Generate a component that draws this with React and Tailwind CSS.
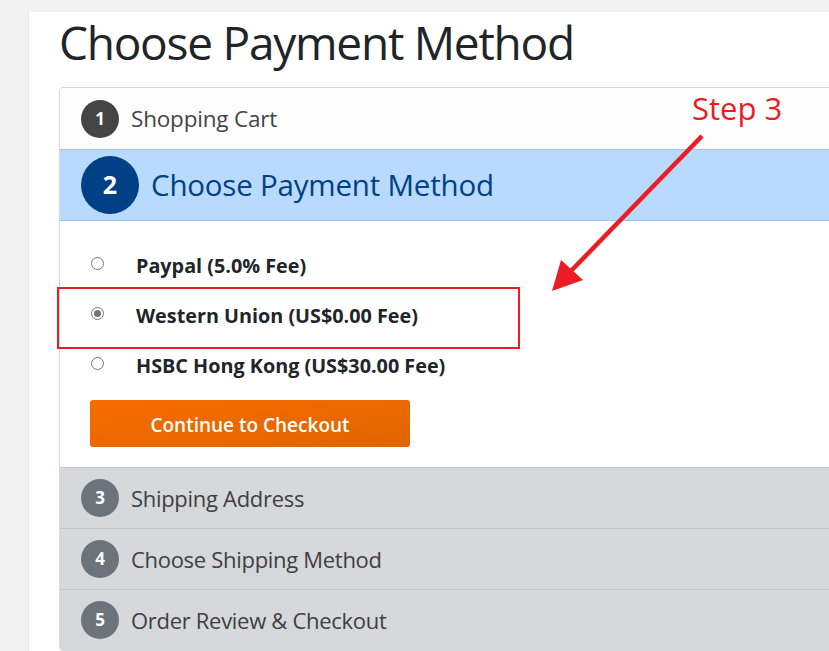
import React from "react";

const font = { fontFamily: '"Open Sans", "Noto Sans", sans-serif' };

function Circle({ n, className }) {
  return (
    <div className={`flex items-center justify-center rounded-full text-white font-bold shrink-0 ${className}`}>
      {n}
    </div>
  );
}

function Radio({ checked }) {
  return (
    <div className="w-[13px] h-[13px] rounded-full border border-[#767676] bg-white flex items-center justify-center shrink-0">
      {checked && <div className="w-[7px] h-[7px] rounded-full bg-[#767676]" />}
    </div>
  );
}

export default function App() {
  const options = [
    { label: "Paypal (5.0% Fee)", checked: false },
    { label: "Western Union (US$0.00 Fee)", checked: true },
    { label: "HSBC Hong Kong (US$30.00 Fee)", checked: false },
  ];
  const later = ["Shipping Address", "Choose Shipping Method", "Order Review & Checkout"];
  return (
    <div className="relative w-[829px] h-[651px] overflow-hidden bg-[#f2f2f2]" style={font}>
      <div className="pt-[12px] pl-[28px]">
        <div className="w-[1100px] h-[700px] bg-white border-l border-[#e6e6e6] pl-[30px]">
          <h1 className="text-[46px] leading-[52px] pt-[4px] pb-[19px] text-[#212529] tracking-[-1.25px]">
            Choose Payment Method
          </h1>
          <div className="border border-[#d9d9d9] rounded-[4px] overflow-hidden w-[900px]">
            <div className="h-[61px] bg-[#fdfdfd] flex items-center pl-[21px] gap-[12px]">
              <Circle n="1" className="w-[38px] h-[38px] bg-[#454545] text-[17px]" />
              <span className="text-[22.5px] text-[#454545] tracking-[-0.2px]">Shopping Cart</span>
            </div>
            <div className="h-[72px] bg-[#b8daff] border-y border-[#9ec4ea] flex items-center pl-[21px] gap-[12px]">
              <Circle n="2" className="w-[58px] h-[58px] bg-[#004085] text-[25px]" />
              <span className="text-[29.5px] text-[#004085] tracking-[-0.2px]">Choose Payment Method</span>
            </div>
            <div className="pt-[17px] pb-[20px] pl-[31px] bg-white">
              {options.map((o) => (
                <div key={o.label} className="h-[50px] flex items-center">
                  <Radio checked={o.checked} />
                  <span className="ml-[32px] pt-[5px] text-[19.8px] font-bold text-[#212529]">{o.label}</span>
                </div>
              ))}
              <button className="mt-[12px] ml-[-1px] w-[320px] h-[47px] pt-[3px] rounded-[3px] bg-gradient-to-br from-[#f86c00] to-[#df6500] text-white text-[19px] font-semibold">
                Continue to Checkout
              </button>
            </div>
            {later.map((t, i) => (
              <div key={t} className="h-[61px] bg-[#d6d8db] border-t border-[#c4c6c9] flex items-center pl-[21px] gap-[12px]">
                <Circle n={String(i + 3)} className="w-[38px] h-[38px] bg-[#6c737b] text-[17px]" />
                <span className="text-[22px] text-[#3f3f3f] tracking-[-0.3px]">{t}</span>
              </div>
            ))}
          </div>
        </div>
      </div>

      {/* annotation overlay */}
      <div className="absolute left-[57px] top-[287px] w-[463px] h-[62px] border-2 border-[#ed1c24]" />
      <div className="absolute left-[692px] top-[88px] text-[31px] leading-[40px] text-[#ed1c24]">
        Step 3
      </div>
      <svg className="absolute left-0 top-0" width="829" height="651" viewBox="0 0 829 651">
        <line x1="702" y1="136" x2="570" y2="272" stroke="#ed1c24" strokeWidth="4.5" />
        <polygon points="552,291 561,260 583,280" fill="#ed1c24" />
      </svg>
    </div>
  );
}
